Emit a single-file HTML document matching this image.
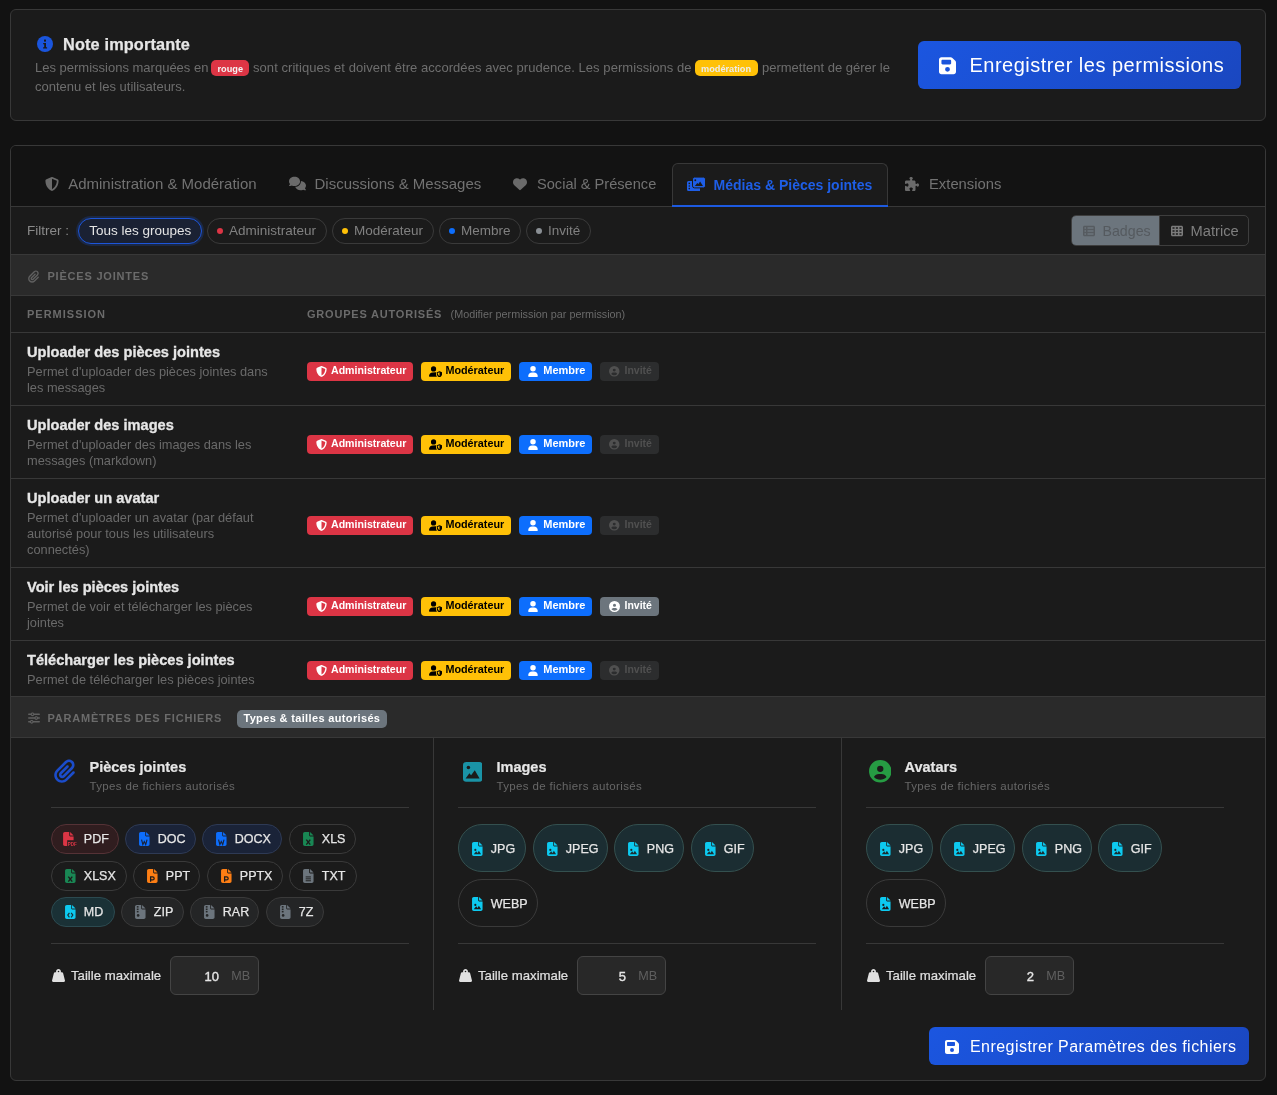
<!DOCTYPE html>
<html><head><meta charset="utf-8"><title>Permissions</title>
<style>
html,body{margin:0;padding:0;}
body{width:1277px;height:1095px;background:#121212;position:relative;overflow:hidden;font-family:"Liberation Sans", sans-serif;}
.t{position:absolute;white-space:nowrap;}
#w{position:absolute;left:0;top:0;width:1277px;height:1095px;will-change:transform;}
.r{position:absolute;display:block;}
</style></head><body>
<div id="w">
<div class="r" style="left:10px;top:9px;width:1256px;height:112px;box-sizing:border-box;border:1px solid #383838;border-radius:6px;background:#1b1b1b;"></div>
<svg class="r" style="left:37.0px;top:36.0px;" width="16" height="16" viewBox="0 0 16 16"><circle cx="8" cy="8" r="8" fill="#1a55dd"/><rect x="7" y="3.6" width="2" height="2" fill="#1b1b1b"/><path d="M6.2 7h2.8v4.2h1.1v1.3H6.1v-1.3h1.1V8.3h-1z" fill="#1b1b1b"/></svg>
<div class="t" style="left:63px;top:33.85px;font-size:16.3px;line-height:21px;color:#e6e6e6;font-weight:700;letter-spacing:0.15px;-webkit-text-stroke:0.25px #e6e6e6;">Note importante</div>
<div class="t" style="left:35px;top:59.20px;font-size:13px;line-height:17px;color:#6e6e6e;font-weight:400;letter-spacing:0px;">Les permissions marquées en</div>
<div class="r" style="left:211px;top:60px;width:38px;height:16px;background:#dc3545;border-radius:5px;"></div>
<div class="t" style="left:217.5px;top:62.61px;font-size:9.2px;line-height:12px;color:#f4f4f4;font-weight:700;letter-spacing:0px;">rouge</div>
<div class="t" style="left:253px;top:59.20px;font-size:13px;line-height:17px;color:#6e6e6e;font-weight:400;letter-spacing:0.058px;">sont critiques et doivent être accordées avec prudence. Les permissions de</div>
<div class="r" style="left:695px;top:60px;width:63px;height:16px;background:#ffc107;border-radius:5px;"></div>
<div class="t" style="left:701px;top:62.61px;font-size:9.2px;line-height:12px;color:#ececec;font-weight:700;letter-spacing:0px;">modération</div>
<div class="t" style="left:762px;top:59.20px;font-size:13px;line-height:17px;color:#6e6e6e;font-weight:400;letter-spacing:0px;">permettent de gérer le</div>
<div class="t" style="left:35px;top:78.00px;font-size:13px;line-height:17px;color:#6e6e6e;font-weight:400;letter-spacing:0px;">contenu et les utilisateurs.</div>
<div class="r" style="left:918px;top:41px;width:323px;height:48px;background:linear-gradient(135deg,#1b56e0,#1a47c0);border-radius:6px;"></div>
<svg class="r" style="left:939px;top:56px;" width="17" height="19.428571428571427" viewBox="0 0 448 512"><path fill="#fff" d="M64 32C28.7 32 0 60.7 0 96v320c0 35.3 28.7 64 64 64h320c35.3 0 64-28.7 64-64V173.3c0-17-6.7-33.3-18.7-45.3L352 50.7C340 38.7 323.7 32 306.7 32H64zm0 96c0-17.7 14.3-32 32-32h192c17.7 0 32 14.3 32 32v64c0 17.7-14.3 32-32 32H96c-17.7 0-32-14.3-32-32v-64zm160 160a64 64 0 1 1 0 128 64 64 0 1 1 0-128z"/></svg>
<div class="t" style="left:969.5px;top:52.27px;font-size:20px;line-height:26px;color:#ffffff;font-weight:400;letter-spacing:0.5px;">Enregistrer les permissions</div>
<div class="r" style="left:10px;top:145px;width:1256px;height:936px;box-sizing:border-box;border:1px solid #383838;border-radius:6px;background:#1b1b1b;overflow:hidden;"></div>
<div class="r" style="left:11px;top:146px;width:1254px;height:60px;background:#131313;border-radius:5px 5px 0 0;"></div>
<div class="r" style="left:11px;top:206px;width:1254px;height:1px;background:#383838;"></div>
<div class="r" style="left:672px;top:163px;width:216px;height:44px;box-sizing:border-box;border:1px solid #383838;border-bottom:none;border-radius:6px 6px 0 0;background:#1b1b1b;"></div>
<div class="r" style="left:672px;top:205px;width:216px;height:2px;background:#1d5ae0;"></div>
<svg class="r" style="left:45px;top:177px;" width="14" height="14" viewBox="0 0 512 512"><path fill="#6a6a6a" d="M256 0c4.6 0 9.2 1 13.4 2.9L457.7 82.8c22 9.3 38.4 31 38.3 57.2-.5 99.2-41.3 280.7-213.6 363.2-16.7 8-36.1 8-52.8 0C57.3 420.7 16.5 239.2 16 140c-.1-26.2 16.3-47.9 38.3-57.2L242.7 2.9C246.8 1 251.4 0 256 0zm0 66.8V444.8C394 378 431.1 230.1 432 141.4L256 66.8z"/></svg>
<div class="t" style="left:68.2px;top:174.00px;font-size:15px;line-height:20px;color:#727272;font-weight:400;letter-spacing:0px;">Administration &amp; Modération</div>
<svg class="r" style="left:289px;top:176px;" width="17" height="15" viewBox="0 0 640 512"><path fill="#6a6a6a" d="M208 352c114.9 0 208-78.8 208-176S322.9 0 208 0 0 78.8 0 176c0 38.6 14.7 74.3 39.6 103.4-3.5 9.4-8.7 17.7-14.2 24.7-4.8 6.2-9.7 11-13.3 14.3-1.8 1.6-3.3 2.9-4.3 3.7-.5.4-.9.7-1.1.8l-.2.2C1 327.2-1.4 334.4.8 340.9S9.1 352 16 352c21.8 0 43.8-5.6 62.1-12.5 9.2-3.5 17.8-7.4 25.2-11.4C134.1 343.3 169.8 352 208 352z"/><path fill="#6a6a6a" d="M448 176c0 112.3-99.1 196.9-216.5 207C255.8 457.4 336.4 512 432 512c38.2 0 73.9-8.7 104.7-23.9 7.5 4 16 7.9 25.2 11.4 18.3 6.9 40.3 12.5 62.1 12.5 6.9 0 13.1-4.5 15.2-11.1 2.1-6.6-.2-13.8-5.8-17.9l-.2-.2c-.2-.2-.6-.4-1.1-.8-1-.8-2.5-2-4.3-3.7-3.6-3.3-8.5-8.1-13.3-14.3-5.5-7-10.7-15.4-14.2-24.7 24.9-29 39.6-64.7 39.6-103.4 0-92.8-84.9-168.9-192.6-175.5.4 5.1.6 10.3.6 15.5z"/></svg>
<div class="t" style="left:314.5px;top:174.00px;font-size:15px;line-height:20px;color:#727272;font-weight:400;letter-spacing:0px;">Discussions &amp; Messages</div>
<svg class="r" style="left:512.7px;top:177px;" width="14" height="14" viewBox="0 0 512 512"><path fill="#6a6a6a" d="M47.6 300.4L228.3 469.1c7.5 7 17.4 10.9 27.7 10.9s20.2-3.9 27.7-10.9L464.4 300.4c30.4-28.3 47.6-68 47.6-109.5v-5.8c0-69.9-50.5-129.5-119.4-141C347 36.5 300.6 51.4 268 84L256 96 244 84c-32.6-32.6-79-47.5-124.6-39.9C50.5 55.6 0 115.2 0 185.1v5.8c0 41.5 17.2 81.2 47.6 109.5z"/></svg>
<div class="t" style="left:537px;top:174.64px;font-size:14.6px;line-height:19px;color:#727272;font-weight:400;letter-spacing:0px;">Social &amp; Présence</div>
<svg class="r" style="left:687px;top:177px;" width="18.5" height="14" viewBox="0 0 18.5 14"><path fill="#1e5ee6" d="M1.5 4H6V11H13V14H1.5A1.5 1.5 0 0 1 0 12.5V5.5A1.5 1.5 0 0 1 1.5 4z"/><circle cx="2.3" cy="6.4" r="0.8" fill="#1b1b1b"/><circle cx="2.3" cy="9" r="0.8" fill="#1b1b1b"/><circle cx="2.3" cy="11.6" r="0.8" fill="#1b1b1b"/><rect x="5.5" y="0.1" width="13" height="10.8" rx="2" fill="#1e5ee6" stroke="#1b1b1b" stroke-width="1"/><circle cx="8.3" cy="3.2" r="0.95" fill="#1b1b1b"/><path d="M7.9 8.9L10.3 6L11.4 7L13.1 4.5L16 8.9z" fill="#1b1b1b"/></svg>
<div class="t" style="left:713.6px;top:175.95px;font-size:14px;line-height:18px;color:#1e5ee6;font-weight:700;letter-spacing:0px;">Médias &amp; Pièces jointes</div>
<svg class="r" style="left:905px;top:177px;" width="14" height="14" viewBox="0 0 512 512"><path fill="#6a6a6a" d="M192 104.8c0-9.2-5.8-17.3-13.2-22.8C167.2 73.3 160 61.3 160 48c0-26.5 28.7-48 64-48s64 21.5 64 48c0 13.3-7.2 25.3-18.8 34c-7.4 5.5-13.2 13.6-13.2 22.8c0 12.8 10.4 23.2 23.2 23.2H336c26.5 0 48 21.5 48 48v56.8c0 12.8 10.4 23.2 23.2 23.2c9.2 0 17.3-5.8 22.8-13.2c8.7-11.6 20.7-18.8 34-18.8c26.5 0 48 28.7 48 64s-21.5 64-48 64c-13.3 0-25.3-7.2-34-18.8c-5.5-7.4-13.6-13.2-22.8-13.2c-12.8 0-23.2 10.4-23.2 23.2V464c0 26.5-21.5 48-48 48H279.2c-12.8 0-23.2-10.4-23.2-23.2c0-9.2 5.8-17.3 13.2-22.8c11.6-8.7 18.8-20.7 18.8-34c0-26.5-28.7-48-64-48s-64 21.5-64 48c0 13.3 7.2 25.3 18.8 34c7.4 5.5 13.2 13.6 13.2 22.8c0 12.8-10.4 23.2-23.2 23.2H48c-26.5 0-48-21.5-48-48V343.2C0 330.4 10.4 320 23.2 320c9.2 0 17.3 5.8 22.8 13.2C54.7 344.8 66.7 352 80 352c26.5 0 48-28.7 48-64s-21.5-64-48-64c-13.3 0-25.3 7.2-34 18.8C40.5 250.2 32.4 256 23.2 256C10.4 256 0 245.6 0 232.8V176c0-26.5 21.5-48 48-48H168.8c12.8 0 23.2-10.4 23.2-23.2z"/></svg>
<div class="t" style="left:929px;top:174.57px;font-size:14.8px;line-height:19px;color:#727272;font-weight:400;letter-spacing:0px;">Extensions</div>
<div class="t" style="left:27px;top:221.62px;font-size:13.5px;line-height:18px;color:#8a8a8a;font-weight:400;letter-spacing:0px;">Filtrer :</div>
<div class="r" style="left:78px;top:218px;width:124px;height:26px;box-sizing:border-box;border:1.5px solid #1d55d8;border-radius:13px;background:#1a2133;box-shadow:0 0 0 2px rgba(29,85,216,0.22);"></div>
<div class="t" style="left:89.3px;top:221.62px;font-size:13.5px;line-height:18px;color:#e4e4e4;font-weight:400;letter-spacing:0px;">Tous les groupes</div>
<div class="r" style="left:207px;top:218px;width:120px;height:26px;box-sizing:border-box;border:1px solid #3a3a3a;border-radius:13px;"></div>
<div class="r" style="left:217px;top:228px;width:6px;height:6px;background:#dc3545;border-radius:3px;"></div>
<div class="t" style="left:229px;top:221.62px;font-size:13.5px;line-height:18px;color:#808080;font-weight:400;letter-spacing:0px;">Administrateur</div>
<div class="r" style="left:332px;top:218px;width:102px;height:26px;box-sizing:border-box;border:1px solid #3a3a3a;border-radius:13px;"></div>
<div class="r" style="left:342px;top:228px;width:6px;height:6px;background:#ffc107;border-radius:3px;"></div>
<div class="t" style="left:354px;top:221.62px;font-size:13.5px;line-height:18px;color:#808080;font-weight:400;letter-spacing:0px;">Modérateur</div>
<div class="r" style="left:439px;top:218px;width:82px;height:26px;box-sizing:border-box;border:1px solid #3a3a3a;border-radius:13px;"></div>
<div class="r" style="left:449px;top:228px;width:6px;height:6px;background:#0d6efd;border-radius:3px;"></div>
<div class="t" style="left:461px;top:221.62px;font-size:13.5px;line-height:18px;color:#808080;font-weight:400;letter-spacing:0px;">Membre</div>
<div class="r" style="left:526px;top:218px;width:65px;height:26px;box-sizing:border-box;border:1px solid #3a3a3a;border-radius:13px;"></div>
<div class="r" style="left:536px;top:228px;width:6px;height:6px;background:#8a8f94;border-radius:3px;"></div>
<div class="t" style="left:548px;top:221.62px;font-size:13.5px;line-height:18px;color:#808080;font-weight:400;letter-spacing:0px;">Invité</div>
<div class="r" style="left:1071px;top:215px;width:178px;height:31px;box-sizing:border-box;border:1px solid #3e3e3e;border-radius:5px;"></div>
<div class="r" style="left:1072px;top:216px;width:88px;height:29px;background:#6c757d;border-radius:4px 0 0 4px;"></div>
<div class="r" style="left:1159px;top:216px;width:1px;height:29px;background:#3e3e3e;"></div>
<svg class="r" style="left:1083px;top:224.5px;" width="12" height="12" viewBox="0 0 512 512"><path fill="#565b60" d="M0 96C0 60.7 28.7 32 64 32H448c35.3 0 64 28.7 64 64V416c0 35.3-28.7 64-64 64H64c-35.3 0-64-28.7-64-64V96zm64 0v64h64V96H64zm384 0H192v64H448V96zM64 224v64h64V224H64zm384 0H192v64H448V224zM64 352v64h64V352H64zm384 0H192v64H448V352z"/></svg>
<div class="t" style="left:1102.5px;top:222.28px;font-size:14.2px;line-height:18px;color:#555a5f;font-weight:400;letter-spacing:0px;">Badges</div>
<svg class="r" style="left:1171px;top:224.5px;" width="12" height="12" viewBox="0 0 512 512"><path fill="#7c7c7c" d="M64 32C28.7 32 0 60.7 0 96V416c0 35.3 28.7 64 64 64H448c35.3 0 64-28.7 64-64V96c0-35.3-28.7-64-64-64H64zm88 64v64H64V96h88zm56 0h88v64H208V96zm240 0v64H360V96h88zM64 224h88v64H64V224zm232 0v64H208V224h88zm64 0h88v64H360V224zM152 352v64H64V352h88zm56 0h88v64H208V352zm240 0v64H360V352h88z"/></svg>
<div class="t" style="left:1190.5px;top:221.61px;font-size:14.7px;line-height:19px;color:#7f7f7f;font-weight:400;letter-spacing:0px;">Matrice</div>
<div class="r" style="left:11px;top:254px;width:1254px;height:1px;background:#383838;"></div>
<div class="r" style="left:11px;top:255px;width:1254px;height:40px;background:#2a2a2a;"></div>
<div class="r" style="left:11px;top:295px;width:1254px;height:1px;background:#383838;"></div>
<svg class="r" style="left:28px;top:270px;" width="11" height="13" viewBox="0 0 448 512"><path fill="#606060" d="M364.2 83.8c-24.4-24.4-64-24.4-88.4 0l-184 184c-42.1 42.1-42.1 110.3 0 152.4s110.3 42.1 152.4 0l152-152c10.9-10.9 28.7-10.9 39.6 0s10.9 28.7 0 39.6l-152 152c-64 64-167.6 64-231.6 0s-64-167.6 0-231.6l184-184c46.3-46.3 121.3-46.3 167.6 0s46.3 121.3 0 167.6l-176 176c-28.6 28.6-75 28.6-103.6 0s-28.6-75 0-103.6l144-144c10.9-10.9 28.7-10.9 39.6 0s10.9 28.7 0 39.6l-144 144c-6.7 6.7-6.7 17.7 0 24.4s17.7 6.7 24.4 0l176-176c24.4-24.4 24.4-64 0-88.4z"/></svg>
<div class="t" style="left:47.4px;top:268.69px;font-size:11px;line-height:14px;color:#6b6b6b;font-weight:700;letter-spacing:0.8px;">PIÈCES JOINTES</div>
<div class="t" style="left:27px;top:307.19px;font-size:11px;line-height:14px;color:#6b6b6b;font-weight:700;letter-spacing:1px;">PERMISSION</div>
<div class="t" style="left:307px;top:307.19px;font-size:11px;line-height:14px;color:#6b6b6b;font-weight:700;letter-spacing:0.8px;">GROUPES AUTORISÉS</div>
<div class="t" style="left:450.6px;top:307.26px;font-size:10.8px;line-height:14px;color:#6a6a6a;font-weight:400;letter-spacing:0px;">(Modifier permission par permission)</div>
<div class="r" style="left:11px;top:332px;width:1254px;height:1px;background:#383838;"></div>
<div class="t" style="left:27px;top:342.94px;font-size:14.6px;line-height:19px;color:#e6e6e6;font-weight:700;letter-spacing:0px;-webkit-text-stroke:0.3px #e6e6e6;">Uploader des pièces jointes</div>
<div class="t" style="left:27px;top:363.06px;font-size:12.8px;line-height:17px;color:#6a6a6a;font-weight:400;letter-spacing:0px;">Permet d&#39;uploader des pièces jointes dans</div>
<div class="t" style="left:27px;top:379.16px;font-size:12.8px;line-height:17px;color:#6a6a6a;font-weight:400;letter-spacing:0px;">les messages</div>
<div class="r" style="left:307px;top:362px;width:106px;height:19px;background:#dc3545;border-radius:4px;"></div>
<svg class="r" style="left:316px;top:366px;" width="11" height="11" viewBox="0 0 512 512"><path fill="#fff" d="M256 0c4.6 0 9.2 1 13.4 2.9L457.7 82.8c22 9.3 38.4 31 38.3 57.2-.5 99.2-41.3 280.7-213.6 363.2-16.7 8-36.1 8-52.8 0C57.3 420.7 16.5 239.2 16 140c-.1-26.2 16.3-47.9 38.3-57.2L242.7 2.9C246.8 1 251.4 0 256 0zm0 66.8V444.8C394 378 431.1 230.1 432 141.4L256 66.8z"/></svg>
<div class="t" style="left:331px;top:362.93px;font-size:10.6px;line-height:14px;color:#fff;font-weight:700;letter-spacing:0px;">Administrateur</div>
<div class="r" style="left:421px;top:362px;width:90px;height:19px;background:#ffc107;border-radius:4px;"></div>
<svg class="r" style="left:429px;top:366px;" width="13" height="11" viewBox="0 0 640 512"><path fill="#000" d="M224 256A128 128 0 1 0 224 0a128 128 0 1 0 0 256zm-45.7 48C79.8 304 0 383.8 0 482.3C0 498.7 13.3 512 29.7 512H388.5c-32-36.7-44.5-86.3-44.5-128V352.9c0-20.8 8.3-40 22.5-54.4-9.3-.7-18.8-1-28.3-1z"/><path fill="#000" d="M528 242.5c-3.4-1.5-7.1-2.3-10.9-2.3s-7.5 .8-10.9 2.3L395.3 289.5c-7.8 3.3-12.9 11-12.9 19.5l.1 27c.5 61.5 26.1 164.6 126.7 212.5 5 2.4 10.8 2.4 15.8 0C625.6 500.6 651.2 397.5 651.7 336l.1-27c0-8.5-5.1-16.2-12.9-19.5L528 242.5zm-11 55.4V479.5C454.3 448 432.4 377.5 430.5 331.3L517 297.9z"/></svg>
<div class="t" style="left:445.4px;top:362.86px;font-size:10.8px;line-height:14px;color:#000;font-weight:700;letter-spacing:0px;">Modérateur</div>
<div class="r" style="left:519px;top:362px;width:73px;height:19px;background:#0d6efd;border-radius:4px;"></div>
<svg class="r" style="left:528px;top:366px;" width="10" height="11" viewBox="0 0 448 512"><path fill="#fff" d="M224 256A128 128 0 1 0 224 0a128 128 0 1 0 0 256zm-45.7 48C79.8 304 0 383.8 0 482.3C0 498.7 13.3 512 29.7 512H418.3c16.4 0 29.7-13.3 29.7-29.7C448 383.8 368.2 304 269.7 304H178.3z"/></svg>
<div class="t" style="left:543.3px;top:363.29px;font-size:11px;line-height:14px;color:#fff;font-weight:700;letter-spacing:0px;">Membre</div>
<div class="r" style="left:600px;top:362px;width:59px;height:19px;background:#2c2d2e;border-radius:4px;"></div>
<svg class="r" style="left:609px;top:366px;" width="10.5" height="10.5" viewBox="0 0 512 512"><path fill="#505050" d="M399 384.2C376.9 345.8 335.4 320 288 320H224c-47.4 0-88.9 25.8-111 64.2c35.2 39.2 86.2 63.8 143 63.8s107.8-24.7 143-63.8zM0 256a256 256 0 1 1 512 0A256 256 0 1 1 0 256zm256 16a72 72 0 1 0 0-144 72 72 0 1 0 0 144z"/></svg>
<div class="t" style="left:624.5px;top:362.96px;font-size:10.5px;line-height:14px;color:#505050;font-weight:700;letter-spacing:0px;">Invité</div>
<div class="r" style="left:11px;top:405px;width:1254px;height:1px;background:#383838;"></div>
<div class="t" style="left:27px;top:415.94px;font-size:14.6px;line-height:19px;color:#e6e6e6;font-weight:700;letter-spacing:0px;-webkit-text-stroke:0.3px #e6e6e6;">Uploader des images</div>
<div class="t" style="left:27px;top:436.06px;font-size:12.8px;line-height:17px;color:#6a6a6a;font-weight:400;letter-spacing:0px;">Permet d&#39;uploader des images dans les</div>
<div class="t" style="left:27px;top:452.16px;font-size:12.8px;line-height:17px;color:#6a6a6a;font-weight:400;letter-spacing:0px;">messages (markdown)</div>
<div class="r" style="left:307px;top:435px;width:106px;height:19px;background:#dc3545;border-radius:4px;"></div>
<svg class="r" style="left:316px;top:439px;" width="11" height="11" viewBox="0 0 512 512"><path fill="#fff" d="M256 0c4.6 0 9.2 1 13.4 2.9L457.7 82.8c22 9.3 38.4 31 38.3 57.2-.5 99.2-41.3 280.7-213.6 363.2-16.7 8-36.1 8-52.8 0C57.3 420.7 16.5 239.2 16 140c-.1-26.2 16.3-47.9 38.3-57.2L242.7 2.9C246.8 1 251.4 0 256 0zm0 66.8V444.8C394 378 431.1 230.1 432 141.4L256 66.8z"/></svg>
<div class="t" style="left:331px;top:435.93px;font-size:10.6px;line-height:14px;color:#fff;font-weight:700;letter-spacing:0px;">Administrateur</div>
<div class="r" style="left:421px;top:435px;width:90px;height:19px;background:#ffc107;border-radius:4px;"></div>
<svg class="r" style="left:429px;top:439px;" width="13" height="11" viewBox="0 0 640 512"><path fill="#000" d="M224 256A128 128 0 1 0 224 0a128 128 0 1 0 0 256zm-45.7 48C79.8 304 0 383.8 0 482.3C0 498.7 13.3 512 29.7 512H388.5c-32-36.7-44.5-86.3-44.5-128V352.9c0-20.8 8.3-40 22.5-54.4-9.3-.7-18.8-1-28.3-1z"/><path fill="#000" d="M528 242.5c-3.4-1.5-7.1-2.3-10.9-2.3s-7.5 .8-10.9 2.3L395.3 289.5c-7.8 3.3-12.9 11-12.9 19.5l.1 27c.5 61.5 26.1 164.6 126.7 212.5 5 2.4 10.8 2.4 15.8 0C625.6 500.6 651.2 397.5 651.7 336l.1-27c0-8.5-5.1-16.2-12.9-19.5L528 242.5zm-11 55.4V479.5C454.3 448 432.4 377.5 430.5 331.3L517 297.9z"/></svg>
<div class="t" style="left:445.4px;top:435.86px;font-size:10.8px;line-height:14px;color:#000;font-weight:700;letter-spacing:0px;">Modérateur</div>
<div class="r" style="left:519px;top:435px;width:73px;height:19px;background:#0d6efd;border-radius:4px;"></div>
<svg class="r" style="left:528px;top:439px;" width="10" height="11" viewBox="0 0 448 512"><path fill="#fff" d="M224 256A128 128 0 1 0 224 0a128 128 0 1 0 0 256zm-45.7 48C79.8 304 0 383.8 0 482.3C0 498.7 13.3 512 29.7 512H418.3c16.4 0 29.7-13.3 29.7-29.7C448 383.8 368.2 304 269.7 304H178.3z"/></svg>
<div class="t" style="left:543.3px;top:436.29px;font-size:11px;line-height:14px;color:#fff;font-weight:700;letter-spacing:0px;">Membre</div>
<div class="r" style="left:600px;top:435px;width:59px;height:19px;background:#2c2d2e;border-radius:4px;"></div>
<svg class="r" style="left:609px;top:439px;" width="10.5" height="10.5" viewBox="0 0 512 512"><path fill="#505050" d="M399 384.2C376.9 345.8 335.4 320 288 320H224c-47.4 0-88.9 25.8-111 64.2c35.2 39.2 86.2 63.8 143 63.8s107.8-24.7 143-63.8zM0 256a256 256 0 1 1 512 0A256 256 0 1 1 0 256zm256 16a72 72 0 1 0 0-144 72 72 0 1 0 0 144z"/></svg>
<div class="t" style="left:624.5px;top:435.96px;font-size:10.5px;line-height:14px;color:#505050;font-weight:700;letter-spacing:0px;">Invité</div>
<div class="r" style="left:11px;top:478px;width:1254px;height:1px;background:#383838;"></div>
<div class="t" style="left:27px;top:488.94px;font-size:14.6px;line-height:19px;color:#e6e6e6;font-weight:700;letter-spacing:0px;-webkit-text-stroke:0.3px #e6e6e6;">Uploader un avatar</div>
<div class="t" style="left:27px;top:509.06px;font-size:12.8px;line-height:17px;color:#6a6a6a;font-weight:400;letter-spacing:0px;">Permet d&#39;uploader un avatar (par défaut</div>
<div class="t" style="left:27px;top:525.16px;font-size:12.8px;line-height:17px;color:#6a6a6a;font-weight:400;letter-spacing:0px;">autorisé pour tous les utilisateurs</div>
<div class="t" style="left:27px;top:541.26px;font-size:12.8px;line-height:17px;color:#6a6a6a;font-weight:400;letter-spacing:0px;">connectés)</div>
<div class="r" style="left:307px;top:516px;width:106px;height:19px;background:#dc3545;border-radius:4px;"></div>
<svg class="r" style="left:316px;top:520px;" width="11" height="11" viewBox="0 0 512 512"><path fill="#fff" d="M256 0c4.6 0 9.2 1 13.4 2.9L457.7 82.8c22 9.3 38.4 31 38.3 57.2-.5 99.2-41.3 280.7-213.6 363.2-16.7 8-36.1 8-52.8 0C57.3 420.7 16.5 239.2 16 140c-.1-26.2 16.3-47.9 38.3-57.2L242.7 2.9C246.8 1 251.4 0 256 0zm0 66.8V444.8C394 378 431.1 230.1 432 141.4L256 66.8z"/></svg>
<div class="t" style="left:331px;top:516.93px;font-size:10.6px;line-height:14px;color:#fff;font-weight:700;letter-spacing:0px;">Administrateur</div>
<div class="r" style="left:421px;top:516px;width:90px;height:19px;background:#ffc107;border-radius:4px;"></div>
<svg class="r" style="left:429px;top:520px;" width="13" height="11" viewBox="0 0 640 512"><path fill="#000" d="M224 256A128 128 0 1 0 224 0a128 128 0 1 0 0 256zm-45.7 48C79.8 304 0 383.8 0 482.3C0 498.7 13.3 512 29.7 512H388.5c-32-36.7-44.5-86.3-44.5-128V352.9c0-20.8 8.3-40 22.5-54.4-9.3-.7-18.8-1-28.3-1z"/><path fill="#000" d="M528 242.5c-3.4-1.5-7.1-2.3-10.9-2.3s-7.5 .8-10.9 2.3L395.3 289.5c-7.8 3.3-12.9 11-12.9 19.5l.1 27c.5 61.5 26.1 164.6 126.7 212.5 5 2.4 10.8 2.4 15.8 0C625.6 500.6 651.2 397.5 651.7 336l.1-27c0-8.5-5.1-16.2-12.9-19.5L528 242.5zm-11 55.4V479.5C454.3 448 432.4 377.5 430.5 331.3L517 297.9z"/></svg>
<div class="t" style="left:445.4px;top:516.86px;font-size:10.8px;line-height:14px;color:#000;font-weight:700;letter-spacing:0px;">Modérateur</div>
<div class="r" style="left:519px;top:516px;width:73px;height:19px;background:#0d6efd;border-radius:4px;"></div>
<svg class="r" style="left:528px;top:520px;" width="10" height="11" viewBox="0 0 448 512"><path fill="#fff" d="M224 256A128 128 0 1 0 224 0a128 128 0 1 0 0 256zm-45.7 48C79.8 304 0 383.8 0 482.3C0 498.7 13.3 512 29.7 512H418.3c16.4 0 29.7-13.3 29.7-29.7C448 383.8 368.2 304 269.7 304H178.3z"/></svg>
<div class="t" style="left:543.3px;top:517.29px;font-size:11px;line-height:14px;color:#fff;font-weight:700;letter-spacing:0px;">Membre</div>
<div class="r" style="left:600px;top:516px;width:59px;height:19px;background:#2c2d2e;border-radius:4px;"></div>
<svg class="r" style="left:609px;top:520px;" width="10.5" height="10.5" viewBox="0 0 512 512"><path fill="#505050" d="M399 384.2C376.9 345.8 335.4 320 288 320H224c-47.4 0-88.9 25.8-111 64.2c35.2 39.2 86.2 63.8 143 63.8s107.8-24.7 143-63.8zM0 256a256 256 0 1 1 512 0A256 256 0 1 1 0 256zm256 16a72 72 0 1 0 0-144 72 72 0 1 0 0 144z"/></svg>
<div class="t" style="left:624.5px;top:516.96px;font-size:10.5px;line-height:14px;color:#505050;font-weight:700;letter-spacing:0px;">Invité</div>
<div class="r" style="left:11px;top:567px;width:1254px;height:1px;background:#383838;"></div>
<div class="t" style="left:27px;top:577.94px;font-size:14.6px;line-height:19px;color:#e6e6e6;font-weight:700;letter-spacing:0px;-webkit-text-stroke:0.3px #e6e6e6;">Voir les pièces jointes</div>
<div class="t" style="left:27px;top:598.06px;font-size:12.8px;line-height:17px;color:#6a6a6a;font-weight:400;letter-spacing:0px;">Permet de voir et télécharger les pièces</div>
<div class="t" style="left:27px;top:614.16px;font-size:12.8px;line-height:17px;color:#6a6a6a;font-weight:400;letter-spacing:0px;">jointes</div>
<div class="r" style="left:307px;top:597px;width:106px;height:19px;background:#dc3545;border-radius:4px;"></div>
<svg class="r" style="left:316px;top:601px;" width="11" height="11" viewBox="0 0 512 512"><path fill="#fff" d="M256 0c4.6 0 9.2 1 13.4 2.9L457.7 82.8c22 9.3 38.4 31 38.3 57.2-.5 99.2-41.3 280.7-213.6 363.2-16.7 8-36.1 8-52.8 0C57.3 420.7 16.5 239.2 16 140c-.1-26.2 16.3-47.9 38.3-57.2L242.7 2.9C246.8 1 251.4 0 256 0zm0 66.8V444.8C394 378 431.1 230.1 432 141.4L256 66.8z"/></svg>
<div class="t" style="left:331px;top:597.93px;font-size:10.6px;line-height:14px;color:#fff;font-weight:700;letter-spacing:0px;">Administrateur</div>
<div class="r" style="left:421px;top:597px;width:90px;height:19px;background:#ffc107;border-radius:4px;"></div>
<svg class="r" style="left:429px;top:601px;" width="13" height="11" viewBox="0 0 640 512"><path fill="#000" d="M224 256A128 128 0 1 0 224 0a128 128 0 1 0 0 256zm-45.7 48C79.8 304 0 383.8 0 482.3C0 498.7 13.3 512 29.7 512H388.5c-32-36.7-44.5-86.3-44.5-128V352.9c0-20.8 8.3-40 22.5-54.4-9.3-.7-18.8-1-28.3-1z"/><path fill="#000" d="M528 242.5c-3.4-1.5-7.1-2.3-10.9-2.3s-7.5 .8-10.9 2.3L395.3 289.5c-7.8 3.3-12.9 11-12.9 19.5l.1 27c.5 61.5 26.1 164.6 126.7 212.5 5 2.4 10.8 2.4 15.8 0C625.6 500.6 651.2 397.5 651.7 336l.1-27c0-8.5-5.1-16.2-12.9-19.5L528 242.5zm-11 55.4V479.5C454.3 448 432.4 377.5 430.5 331.3L517 297.9z"/></svg>
<div class="t" style="left:445.4px;top:597.86px;font-size:10.8px;line-height:14px;color:#000;font-weight:700;letter-spacing:0px;">Modérateur</div>
<div class="r" style="left:519px;top:597px;width:73px;height:19px;background:#0d6efd;border-radius:4px;"></div>
<svg class="r" style="left:528px;top:601px;" width="10" height="11" viewBox="0 0 448 512"><path fill="#fff" d="M224 256A128 128 0 1 0 224 0a128 128 0 1 0 0 256zm-45.7 48C79.8 304 0 383.8 0 482.3C0 498.7 13.3 512 29.7 512H418.3c16.4 0 29.7-13.3 29.7-29.7C448 383.8 368.2 304 269.7 304H178.3z"/></svg>
<div class="t" style="left:543.3px;top:598.29px;font-size:11px;line-height:14px;color:#fff;font-weight:700;letter-spacing:0px;">Membre</div>
<div class="r" style="left:600px;top:597px;width:59px;height:19px;background:#6c757d;border-radius:4px;"></div>
<svg class="r" style="left:609px;top:601px;" width="11" height="11" viewBox="0 0 512 512"><path fill="#fff" d="M399 384.2C376.9 345.8 335.4 320 288 320H224c-47.4 0-88.9 25.8-111 64.2c35.2 39.2 86.2 63.8 143 63.8s107.8-24.7 143-63.8zM0 256a256 256 0 1 1 512 0A256 256 0 1 1 0 256zm256 16a72 72 0 1 0 0-144 72 72 0 1 0 0 144z"/></svg>
<div class="t" style="left:624.5px;top:597.96px;font-size:10.5px;line-height:14px;color:#fff;font-weight:700;letter-spacing:0px;">Invité</div>
<div class="r" style="left:11px;top:640px;width:1254px;height:1px;background:#383838;"></div>
<div class="t" style="left:27px;top:650.94px;font-size:14.6px;line-height:19px;color:#e6e6e6;font-weight:700;letter-spacing:0px;-webkit-text-stroke:0.3px #e6e6e6;">Télécharger les pièces jointes</div>
<div class="t" style="left:27px;top:671.06px;font-size:12.8px;line-height:17px;color:#6a6a6a;font-weight:400;letter-spacing:0px;">Permet de télécharger les pièces jointes</div>
<div class="r" style="left:307px;top:661px;width:106px;height:19px;background:#dc3545;border-radius:4px;"></div>
<svg class="r" style="left:316px;top:665px;" width="11" height="11" viewBox="0 0 512 512"><path fill="#fff" d="M256 0c4.6 0 9.2 1 13.4 2.9L457.7 82.8c22 9.3 38.4 31 38.3 57.2-.5 99.2-41.3 280.7-213.6 363.2-16.7 8-36.1 8-52.8 0C57.3 420.7 16.5 239.2 16 140c-.1-26.2 16.3-47.9 38.3-57.2L242.7 2.9C246.8 1 251.4 0 256 0zm0 66.8V444.8C394 378 431.1 230.1 432 141.4L256 66.8z"/></svg>
<div class="t" style="left:331px;top:661.93px;font-size:10.6px;line-height:14px;color:#fff;font-weight:700;letter-spacing:0px;">Administrateur</div>
<div class="r" style="left:421px;top:661px;width:90px;height:19px;background:#ffc107;border-radius:4px;"></div>
<svg class="r" style="left:429px;top:665px;" width="13" height="11" viewBox="0 0 640 512"><path fill="#000" d="M224 256A128 128 0 1 0 224 0a128 128 0 1 0 0 256zm-45.7 48C79.8 304 0 383.8 0 482.3C0 498.7 13.3 512 29.7 512H388.5c-32-36.7-44.5-86.3-44.5-128V352.9c0-20.8 8.3-40 22.5-54.4-9.3-.7-18.8-1-28.3-1z"/><path fill="#000" d="M528 242.5c-3.4-1.5-7.1-2.3-10.9-2.3s-7.5 .8-10.9 2.3L395.3 289.5c-7.8 3.3-12.9 11-12.9 19.5l.1 27c.5 61.5 26.1 164.6 126.7 212.5 5 2.4 10.8 2.4 15.8 0C625.6 500.6 651.2 397.5 651.7 336l.1-27c0-8.5-5.1-16.2-12.9-19.5L528 242.5zm-11 55.4V479.5C454.3 448 432.4 377.5 430.5 331.3L517 297.9z"/></svg>
<div class="t" style="left:445.4px;top:661.86px;font-size:10.8px;line-height:14px;color:#000;font-weight:700;letter-spacing:0px;">Modérateur</div>
<div class="r" style="left:519px;top:661px;width:73px;height:19px;background:#0d6efd;border-radius:4px;"></div>
<svg class="r" style="left:528px;top:665px;" width="10" height="11" viewBox="0 0 448 512"><path fill="#fff" d="M224 256A128 128 0 1 0 224 0a128 128 0 1 0 0 256zm-45.7 48C79.8 304 0 383.8 0 482.3C0 498.7 13.3 512 29.7 512H418.3c16.4 0 29.7-13.3 29.7-29.7C448 383.8 368.2 304 269.7 304H178.3z"/></svg>
<div class="t" style="left:543.3px;top:662.29px;font-size:11px;line-height:14px;color:#fff;font-weight:700;letter-spacing:0px;">Membre</div>
<div class="r" style="left:600px;top:661px;width:59px;height:19px;background:#2c2d2e;border-radius:4px;"></div>
<svg class="r" style="left:609px;top:665px;" width="10.5" height="10.5" viewBox="0 0 512 512"><path fill="#505050" d="M399 384.2C376.9 345.8 335.4 320 288 320H224c-47.4 0-88.9 25.8-111 64.2c35.2 39.2 86.2 63.8 143 63.8s107.8-24.7 143-63.8zM0 256a256 256 0 1 1 512 0A256 256 0 1 1 0 256zm256 16a72 72 0 1 0 0-144 72 72 0 1 0 0 144z"/></svg>
<div class="t" style="left:624.5px;top:661.96px;font-size:10.5px;line-height:14px;color:#505050;font-weight:700;letter-spacing:0px;">Invité</div>
<div class="r" style="left:11px;top:696px;width:1254px;height:1px;background:#383838;"></div>
<div class="r" style="left:11px;top:697px;width:1254px;height:40px;background:#2a2a2a;"></div>
<div class="r" style="left:11px;top:737px;width:1254px;height:1px;background:#383838;"></div>
<svg class="r" style="left:28px;top:712px;" width="12" height="12" viewBox="0 0 512 512"><path fill="#606060" d="M0 416c0 17.7 14.3 32 32 32l54.7 0c12.3 28.3 40.5 48 73.3 48s61-19.7 73.3-48L480 448c17.7 0 32-14.3 32-32s-14.3-32-32-32l-246.7 0c-12.3-28.3-40.5-48-73.3-48s-61 19.7-73.3 48L32 384c-17.7 0-32 14.3-32 32zm128 0a32 32 0 1 1 64 0 32 32 0 1 1 -64 0zM320 256a32 32 0 1 1 64 0 32 32 0 1 1 -64 0zm32-80c-32.8 0-61 19.7-73.3 48L32 224c-17.7 0-32 14.3-32 32s14.3 32 32 32l246.7 0c12.3 28.3 40.5 48 73.3 48s61-19.7 73.3-48l54.7 0c17.7 0 32-14.3 32-32s-14.3-32-32-32l-54.7 0c-12.3-28.3-40.5-48-73.3-48zM192 128a32 32 0 1 1 0-64 32 32 0 1 1 0 64zm73.3-64C253 35.7 224.8 16 192 16s-61 19.7-73.3 48L32 64C14.3 64 0 78.3 0 96s14.3 32 32 32l86.7 0c12.3 28.3 40.5 48 73.3 48s61-19.7 73.3-48L480 128c17.7 0 32-14.3 32-32s-14.3-32-32-32L265.3 64z"/></svg>
<div class="t" style="left:47.4px;top:711.19px;font-size:11px;line-height:14px;color:#6b6b6b;font-weight:700;letter-spacing:0.8px;">PARAMÈTRES DES FICHIERS</div>
<div class="r" style="left:237px;top:710px;width:150px;height:18px;background:#6c757d;border-radius:5px;"></div>
<div class="t" style="left:243.4px;top:710.99px;font-size:11px;line-height:14px;color:#fff;font-weight:700;letter-spacing:0.35px;">Types &amp; tailles autorisés</div>
<div class="r" style="left:433px;top:738px;width:1px;height:272px;background:#383838;"></div>
<div class="r" style="left:841px;top:738px;width:1px;height:272px;background:#383838;"></div>
<div class="t" style="left:89.5px;top:757.88px;font-size:14.5px;line-height:19px;color:#e6e6e6;font-weight:700;letter-spacing:0px;-webkit-text-stroke:0.2px #e6e6e6;">Pièces jointes</div>
<div class="t" style="left:89.5px;top:778.92px;font-size:11.5px;line-height:15px;color:#676767;font-weight:400;letter-spacing:0.35px;">Types de fichiers autorisés</div>
<div class="r" style="left:51px;top:807px;width:358px;height:1px;background:#383838;"></div>
<div class="r" style="left:51px;top:943px;width:358px;height:1px;background:#383838;"></div>
<svg class="r" style="left:52px;top:968.8px;" width="13" height="13" viewBox="0 0 512 512"><path fill="#e0e0e0" d="M224 96a32 32 0 1 1 64 0 32 32 0 1 1 -64 0zm122.5 32c3.5-10 5.5-20.8 5.5-32c0-53-43-96-96-96s-96 43-96 96c0 11.2 1.9 22 5.5 32H120c-22 0-41.2 15-46.6 36.4l-72 288c-3.6 14.3-.4 29.5 8.7 41.2S33.2 512 48 512H464c14.8 0 28.7-6.8 37.8-18.5s12.3-26.8 8.7-41.2l-72-288C433.2 143 414 128 392 128H346.5z"/></svg>
<div class="t" style="left:71px;top:966.93px;font-size:13.2px;line-height:17px;color:#e0e0e0;font-weight:400;letter-spacing:0px;-webkit-text-stroke:0.2px #e0e0e0;">Taille maximale</div>
<div class="t" style="left:496.5px;top:757.88px;font-size:14.5px;line-height:19px;color:#e6e6e6;font-weight:700;letter-spacing:0px;-webkit-text-stroke:0.2px #e6e6e6;">Images</div>
<div class="t" style="left:496.5px;top:778.92px;font-size:11.5px;line-height:15px;color:#676767;font-weight:400;letter-spacing:0.35px;">Types de fichiers autorisés</div>
<div class="r" style="left:458px;top:807px;width:358px;height:1px;background:#383838;"></div>
<div class="r" style="left:458px;top:943px;width:358px;height:1px;background:#383838;"></div>
<svg class="r" style="left:459px;top:968.8px;" width="13" height="13" viewBox="0 0 512 512"><path fill="#e0e0e0" d="M224 96a32 32 0 1 1 64 0 32 32 0 1 1 -64 0zm122.5 32c3.5-10 5.5-20.8 5.5-32c0-53-43-96-96-96s-96 43-96 96c0 11.2 1.9 22 5.5 32H120c-22 0-41.2 15-46.6 36.4l-72 288c-3.6 14.3-.4 29.5 8.7 41.2S33.2 512 48 512H464c14.8 0 28.7-6.8 37.8-18.5s12.3-26.8 8.7-41.2l-72-288C433.2 143 414 128 392 128H346.5z"/></svg>
<div class="t" style="left:478px;top:966.93px;font-size:13.2px;line-height:17px;color:#e0e0e0;font-weight:400;letter-spacing:0px;-webkit-text-stroke:0.2px #e0e0e0;">Taille maximale</div>
<div class="t" style="left:904.5px;top:757.88px;font-size:14.5px;line-height:19px;color:#e6e6e6;font-weight:700;letter-spacing:0px;-webkit-text-stroke:0.2px #e6e6e6;">Avatars</div>
<div class="t" style="left:904.5px;top:778.92px;font-size:11.5px;line-height:15px;color:#676767;font-weight:400;letter-spacing:0.35px;">Types de fichiers autorisés</div>
<div class="r" style="left:866px;top:807px;width:358px;height:1px;background:#383838;"></div>
<div class="r" style="left:866px;top:943px;width:358px;height:1px;background:#383838;"></div>
<svg class="r" style="left:867px;top:968.8px;" width="13" height="13" viewBox="0 0 512 512"><path fill="#e0e0e0" d="M224 96a32 32 0 1 1 64 0 32 32 0 1 1 -64 0zm122.5 32c3.5-10 5.5-20.8 5.5-32c0-53-43-96-96-96s-96 43-96 96c0 11.2 1.9 22 5.5 32H120c-22 0-41.2 15-46.6 36.4l-72 288c-3.6 14.3-.4 29.5 8.7 41.2S33.2 512 48 512H464c14.8 0 28.7-6.8 37.8-18.5s12.3-26.8 8.7-41.2l-72-288C433.2 143 414 128 392 128H346.5z"/></svg>
<div class="t" style="left:886px;top:966.93px;font-size:13.2px;line-height:17px;color:#e0e0e0;font-weight:400;letter-spacing:0px;-webkit-text-stroke:0.2px #e0e0e0;">Taille maximale</div>
<svg class="r" style="left:54px;top:759px;" width="21" height="24" viewBox="0 0 448 512"><path fill="#1b4cca" d="M364.2 83.8c-24.4-24.4-64-24.4-88.4 0l-184 184c-42.1 42.1-42.1 110.3 0 152.4s110.3 42.1 152.4 0l152-152c10.9-10.9 28.7-10.9 39.6 0s10.9 28.7 0 39.6l-152 152c-64 64-167.6 64-231.6 0s-64-167.6 0-231.6l184-184c46.3-46.3 121.3-46.3 167.6 0s46.3 121.3 0 167.6l-176 176c-28.6 28.6-75 28.6-103.6 0s-28.6-75 0-103.6l144-144c10.9-10.9 28.7-10.9 39.6 0s10.9 28.7 0 39.6l-144 144c-6.7 6.7-6.7 17.7 0 24.4s17.7 6.7 24.4 0l176-176c24.4-24.4 24.4-64 0-88.4z"/></svg>
<svg class="r" style="left:462.6px;top:761.8px;" width="19.4" height="19.8" viewBox="0 0 19.4 19.8"><rect x="0" y="0" width="19.4" height="19.8" rx="3.2" fill="#1a93a6"/><circle cx="5.4" cy="5.5" r="1.75" fill="#1b1b1b"/><path d="M2.6 16.4L6.4 11.2L8.1 13.2L11.8 8.2L16.6 16.4z" fill="#1b1b1b"/></svg>
<svg class="r" style="left:868.5px;top:760px;" width="22.5" height="22.5" viewBox="0 0 512 512"><path fill="#269c43" d="M399 384.2C376.9 345.8 335.4 320 288 320H224c-47.4 0-88.9 25.8-111 64.2c35.2 39.2 86.2 63.8 143 63.8s107.8-24.7 143-63.8zM0 256a256 256 0 1 1 512 0A256 256 0 1 1 0 256zm256 16a72 72 0 1 0 0-144 72 72 0 1 0 0 144z"/></svg>
<div class="r" style="left:51px;top:824px;width:68px;height:30px;box-sizing:border-box;border:1px solid #553236;border-radius:15.0px;background:#301d1f;"></div>
<svg class="r" style="left:63.2px;top:832.0px;" width="14.2" height="14" viewBox="0 0 512 512"><path fill="#dc3545" d="M0 64C0 28.7 28.7 0 64 0H224V128c0 17.7 14.3 32 32 32H384V448c0 35.3-28.7 64-64 64H64c-35.3 0-64-28.7-64-64V64zm384 64H256V0L384 128z"/><rect x="150" y="300" width="362" height="212" fill="#301d1f"/><text x="170" y="500" font-family="Liberation Sans" font-weight="700" font-size="200" textLength="330" lengthAdjust="spacingAndGlyphs" fill="#dc3545">PDF</text></svg>
<div class="t" style="left:83.8px;top:831.37px;font-size:12.5px;line-height:16px;color:#e6e6e6;font-weight:400;letter-spacing:0px;-webkit-text-stroke:0.25px #e6e6e6;">PDF</div>
<div class="r" style="left:125px;top:824px;width:71px;height:30px;box-sizing:border-box;border:1px solid #2e3a55;border-radius:15.0px;background:#1a2338;"></div>
<svg class="r" style="left:139px;top:832.4px;" width="10.6" height="14" viewBox="0 0 384 512"><path fill="#0d6efd" d="M0 64C0 28.7 28.7 0 64 0H224V128c0 17.7 14.3 32 32 32H384V448c0 35.3-28.7 64-64 64H64c-35.3 0-64-28.7-64-64V64zm384 64H256V0L384 128z"/><path d="M92 280L140 460L192 350L244 460L292 280" stroke="#1a2338" stroke-width="42" fill="none" stroke-linejoin="miter"/></svg>
<div class="t" style="left:157.8px;top:831.37px;font-size:12.5px;line-height:16px;color:#e6e6e6;font-weight:400;letter-spacing:0px;-webkit-text-stroke:0.25px #e6e6e6;">DOC</div>
<div class="r" style="left:202px;top:824px;width:80px;height:30px;box-sizing:border-box;border:1px solid #2e3a55;border-radius:15.0px;background:#1a2338;"></div>
<svg class="r" style="left:216px;top:832.4px;" width="10.6" height="14" viewBox="0 0 384 512"><path fill="#0d6efd" d="M0 64C0 28.7 28.7 0 64 0H224V128c0 17.7 14.3 32 32 32H384V448c0 35.3-28.7 64-64 64H64c-35.3 0-64-28.7-64-64V64zm384 64H256V0L384 128z"/><path d="M92 280L140 460L192 350L244 460L292 280" stroke="#1a2338" stroke-width="42" fill="none" stroke-linejoin="miter"/></svg>
<div class="t" style="left:234.8px;top:831.37px;font-size:12.5px;line-height:16px;color:#e6e6e6;font-weight:400;letter-spacing:0px;-webkit-text-stroke:0.25px #e6e6e6;">DOCX</div>
<div class="r" style="left:289px;top:824px;width:67px;height:30px;box-sizing:border-box;border:1px solid #3a3a3a;border-radius:15.0px;background:transparent;"></div>
<svg class="r" style="left:303px;top:832.4px;" width="10.6" height="14" viewBox="0 0 384 512"><path fill="#198754" d="M0 64C0 28.7 28.7 0 64 0H224V128c0 17.7 14.3 32 32 32H384V448c0 35.3-28.7 64-64 64H64c-35.3 0-64-28.7-64-64V64zm384 64H256V0L384 128z"/><path d="M120 280L264 460M264 280L120 460" stroke="#1b1b1b" stroke-width="50" fill="none"/></svg>
<div class="t" style="left:321.8px;top:831.37px;font-size:12.5px;line-height:16px;color:#e6e6e6;font-weight:400;letter-spacing:0px;-webkit-text-stroke:0.25px #e6e6e6;">XLS</div>
<div class="r" style="left:51px;top:861px;width:76px;height:30px;box-sizing:border-box;border:1px solid #3a3a3a;border-radius:15.0px;background:transparent;"></div>
<svg class="r" style="left:65px;top:869.4px;" width="10.6" height="14" viewBox="0 0 384 512"><path fill="#198754" d="M0 64C0 28.7 28.7 0 64 0H224V128c0 17.7 14.3 32 32 32H384V448c0 35.3-28.7 64-64 64H64c-35.3 0-64-28.7-64-64V64zm384 64H256V0L384 128z"/><path d="M120 280L264 460M264 280L120 460" stroke="#1b1b1b" stroke-width="50" fill="none"/></svg>
<div class="t" style="left:83.8px;top:868.37px;font-size:12.5px;line-height:16px;color:#e6e6e6;font-weight:400;letter-spacing:0px;-webkit-text-stroke:0.25px #e6e6e6;">XLSX</div>
<div class="r" style="left:133px;top:861px;width:67px;height:30px;box-sizing:border-box;border:1px solid #3a3a3a;border-radius:15.0px;background:transparent;"></div>
<svg class="r" style="left:147px;top:869.4px;" width="10.6" height="14" viewBox="0 0 384 512"><path fill="#fd7e14" d="M0 64C0 28.7 28.7 0 64 0H224V128c0 17.7 14.3 32 32 32H384V448c0 35.3-28.7 64-64 64H64c-35.3 0-64-28.7-64-64V64zm384 64H256V0L384 128z"/><path d="M130 470V290H205a55 55 0 0 1 0 110H130" stroke="#1b1b1b" stroke-width="46" fill="none"/></svg>
<div class="t" style="left:165.8px;top:868.37px;font-size:12.5px;line-height:16px;color:#e6e6e6;font-weight:400;letter-spacing:0px;-webkit-text-stroke:0.25px #e6e6e6;">PPT</div>
<div class="r" style="left:207px;top:861px;width:76px;height:30px;box-sizing:border-box;border:1px solid #3a3a3a;border-radius:15.0px;background:transparent;"></div>
<svg class="r" style="left:221px;top:869.4px;" width="10.6" height="14" viewBox="0 0 384 512"><path fill="#fd7e14" d="M0 64C0 28.7 28.7 0 64 0H224V128c0 17.7 14.3 32 32 32H384V448c0 35.3-28.7 64-64 64H64c-35.3 0-64-28.7-64-64V64zm384 64H256V0L384 128z"/><path d="M130 470V290H205a55 55 0 0 1 0 110H130" stroke="#1b1b1b" stroke-width="46" fill="none"/></svg>
<div class="t" style="left:239.8px;top:868.37px;font-size:12.5px;line-height:16px;color:#e6e6e6;font-weight:400;letter-spacing:0px;-webkit-text-stroke:0.25px #e6e6e6;">PPTX</div>
<div class="r" style="left:289px;top:861px;width:68px;height:30px;box-sizing:border-box;border:1px solid #3a3a3a;border-radius:15.0px;background:transparent;"></div>
<svg class="r" style="left:303px;top:869.4px;" width="10.6" height="14" viewBox="0 0 384 512"><path fill="#6c757d" d="M0 64C0 28.7 28.7 0 64 0H224V128c0 17.7 14.3 32 32 32H384V448c0 35.3-28.7 64-64 64H64c-35.3 0-64-28.7-64-64V64zm384 64H256V0L384 128z"/><path d="M96 290H288M96 360H288M96 430H288" stroke="#1b1b1b" stroke-width="34" fill="none"/></svg>
<div class="t" style="left:321.8px;top:868.37px;font-size:12.5px;line-height:16px;color:#e6e6e6;font-weight:400;letter-spacing:0px;-webkit-text-stroke:0.25px #e6e6e6;">TXT</div>
<div class="r" style="left:51px;top:897px;width:64px;height:30px;box-sizing:border-box;border:1px solid #2c4a50;border-radius:15.0px;background:#1a3136;"></div>
<svg class="r" style="left:65px;top:905.4px;" width="10.6" height="14" viewBox="0 0 384 512"><path fill="#0dcaf0" d="M0 64C0 28.7 28.7 0 64 0H224V128c0 17.7 14.3 32 32 32H384V448c0 35.3-28.7 64-64 64H64c-35.3 0-64-28.7-64-64V64zm384 64H256V0L384 128z"/><path d="M160 290L100 370L160 450M224 290L284 370L224 450" stroke="#1a3136" stroke-width="42" fill="none"/></svg>
<div class="t" style="left:83.8px;top:904.37px;font-size:12.5px;line-height:16px;color:#e6e6e6;font-weight:400;letter-spacing:0px;-webkit-text-stroke:0.25px #e6e6e6;">MD</div>
<div class="r" style="left:121px;top:897px;width:63px;height:30px;box-sizing:border-box;border:1px solid #3a3a3a;border-radius:15.0px;background:#242526;"></div>
<svg class="r" style="left:135px;top:905.4px;" width="10.6" height="14" viewBox="0 0 384 512"><path fill="#6c757d" d="M0 64C0 28.7 28.7 0 64 0H224V128c0 17.7 14.3 32 32 32H384V448c0 35.3-28.7 64-64 64H64c-35.3 0-64-28.7-64-64V64zm384 64H256V0L384 128z"/><rect x="64" y="40" width="64" height="56" fill="#242526"/><rect x="64" y="128" width="64" height="56" fill="#242526"/><rect x="64" y="216" width="64" height="56" fill="#242526"/><circle cx="112" cy="380" r="48" fill="#242526"/></svg>
<div class="t" style="left:153.8px;top:904.37px;font-size:12.5px;line-height:16px;color:#e6e6e6;font-weight:400;letter-spacing:0px;-webkit-text-stroke:0.25px #e6e6e6;">ZIP</div>
<div class="r" style="left:190px;top:897px;width:69px;height:30px;box-sizing:border-box;border:1px solid #3a3a3a;border-radius:15.0px;background:#242526;"></div>
<svg class="r" style="left:204px;top:905.4px;" width="10.6" height="14" viewBox="0 0 384 512"><path fill="#6c757d" d="M0 64C0 28.7 28.7 0 64 0H224V128c0 17.7 14.3 32 32 32H384V448c0 35.3-28.7 64-64 64H64c-35.3 0-64-28.7-64-64V64zm384 64H256V0L384 128z"/><rect x="64" y="40" width="64" height="56" fill="#242526"/><rect x="64" y="128" width="64" height="56" fill="#242526"/><rect x="64" y="216" width="64" height="56" fill="#242526"/><circle cx="112" cy="380" r="48" fill="#242526"/></svg>
<div class="t" style="left:222.8px;top:904.37px;font-size:12.5px;line-height:16px;color:#e6e6e6;font-weight:400;letter-spacing:0px;-webkit-text-stroke:0.25px #e6e6e6;">RAR</div>
<div class="r" style="left:266px;top:897px;width:58px;height:30px;box-sizing:border-box;border:1px solid #3a3a3a;border-radius:15.0px;background:#242526;"></div>
<svg class="r" style="left:280px;top:905.4px;" width="10.6" height="14" viewBox="0 0 384 512"><path fill="#6c757d" d="M0 64C0 28.7 28.7 0 64 0H224V128c0 17.7 14.3 32 32 32H384V448c0 35.3-28.7 64-64 64H64c-35.3 0-64-28.7-64-64V64zm384 64H256V0L384 128z"/><rect x="64" y="40" width="64" height="56" fill="#242526"/><rect x="64" y="128" width="64" height="56" fill="#242526"/><rect x="64" y="216" width="64" height="56" fill="#242526"/><circle cx="112" cy="380" r="48" fill="#242526"/></svg>
<div class="t" style="left:298.8px;top:904.37px;font-size:12.5px;line-height:16px;color:#e6e6e6;font-weight:400;letter-spacing:0px;-webkit-text-stroke:0.25px #e6e6e6;">7Z</div>
<div class="r" style="left:458px;top:824px;width:68px;height:48px;box-sizing:border-box;border:1px solid #34504f;border-radius:24.0px;background:#1b2d32;"></div>
<svg class="r" style="left:472px;top:842.0px;" width="10.6" height="14" viewBox="0 0 384 512"><path fill="#0dcaf0" d="M0 64C0 28.7 28.7 0 64 0H224V128c0 17.7 14.3 32 32 32H384V448c0 35.3-28.7 64-64 64H64c-35.3 0-64-28.7-64-64V64zm384 64H256V0L384 128z"/><circle cx="120" cy="290" r="40" fill="#1b2d32"/><path d="M64 450L150 340L200 400L250 320L330 450z" fill="#1b2d32"/></svg>
<div class="t" style="left:490.8px;top:840.97px;font-size:12.5px;line-height:16px;color:#e6e6e6;font-weight:400;letter-spacing:0px;-webkit-text-stroke:0.25px #e6e6e6;">JPG</div>
<div class="r" style="left:533px;top:824px;width:75px;height:48px;box-sizing:border-box;border:1px solid #34504f;border-radius:24.0px;background:#1b2d32;"></div>
<svg class="r" style="left:547px;top:842.0px;" width="10.6" height="14" viewBox="0 0 384 512"><path fill="#0dcaf0" d="M0 64C0 28.7 28.7 0 64 0H224V128c0 17.7 14.3 32 32 32H384V448c0 35.3-28.7 64-64 64H64c-35.3 0-64-28.7-64-64V64zm384 64H256V0L384 128z"/><circle cx="120" cy="290" r="40" fill="#1b2d32"/><path d="M64 450L150 340L200 400L250 320L330 450z" fill="#1b2d32"/></svg>
<div class="t" style="left:565.8px;top:840.97px;font-size:12.5px;line-height:16px;color:#e6e6e6;font-weight:400;letter-spacing:0px;-webkit-text-stroke:0.25px #e6e6e6;">JPEG</div>
<div class="r" style="left:614px;top:824px;width:70px;height:48px;box-sizing:border-box;border:1px solid #34504f;border-radius:24.0px;background:#1b2d32;"></div>
<svg class="r" style="left:628px;top:842.0px;" width="10.6" height="14" viewBox="0 0 384 512"><path fill="#0dcaf0" d="M0 64C0 28.7 28.7 0 64 0H224V128c0 17.7 14.3 32 32 32H384V448c0 35.3-28.7 64-64 64H64c-35.3 0-64-28.7-64-64V64zm384 64H256V0L384 128z"/><circle cx="120" cy="290" r="40" fill="#1b2d32"/><path d="M64 450L150 340L200 400L250 320L330 450z" fill="#1b2d32"/></svg>
<div class="t" style="left:646.8px;top:840.97px;font-size:12.5px;line-height:16px;color:#e6e6e6;font-weight:400;letter-spacing:0px;-webkit-text-stroke:0.25px #e6e6e6;">PNG</div>
<div class="r" style="left:691px;top:824px;width:63px;height:48px;box-sizing:border-box;border:1px solid #34504f;border-radius:24.0px;background:#1b2d32;"></div>
<svg class="r" style="left:705px;top:842.0px;" width="10.6" height="14" viewBox="0 0 384 512"><path fill="#0dcaf0" d="M0 64C0 28.7 28.7 0 64 0H224V128c0 17.7 14.3 32 32 32H384V448c0 35.3-28.7 64-64 64H64c-35.3 0-64-28.7-64-64V64zm384 64H256V0L384 128z"/><circle cx="120" cy="290" r="40" fill="#1b2d32"/><path d="M64 450L150 340L200 400L250 320L330 450z" fill="#1b2d32"/></svg>
<div class="t" style="left:723.8px;top:840.97px;font-size:12.5px;line-height:16px;color:#e6e6e6;font-weight:400;letter-spacing:0px;-webkit-text-stroke:0.25px #e6e6e6;">GIF</div>
<div class="r" style="left:458px;top:879px;width:80px;height:48px;box-sizing:border-box;border:1px solid #3a3a3a;border-radius:24.0px;background:transparent;"></div>
<svg class="r" style="left:472px;top:897.0px;" width="10.6" height="14" viewBox="0 0 384 512"><path fill="#0dcaf0" d="M0 64C0 28.7 28.7 0 64 0H224V128c0 17.7 14.3 32 32 32H384V448c0 35.3-28.7 64-64 64H64c-35.3 0-64-28.7-64-64V64zm384 64H256V0L384 128z"/><circle cx="120" cy="290" r="40" fill="#1b1b1b"/><path d="M64 450L150 340L200 400L250 320L330 450z" fill="#1b1b1b"/></svg>
<div class="t" style="left:490.8px;top:895.97px;font-size:12.5px;line-height:16px;color:#e6e6e6;font-weight:400;letter-spacing:0px;-webkit-text-stroke:0.25px #e6e6e6;">WEBP</div>
<div class="r" style="left:866px;top:824px;width:67px;height:48px;box-sizing:border-box;border:1px solid #34504f;border-radius:24.0px;background:#1b2d32;"></div>
<svg class="r" style="left:880px;top:842.0px;" width="10.6" height="14" viewBox="0 0 384 512"><path fill="#0dcaf0" d="M0 64C0 28.7 28.7 0 64 0H224V128c0 17.7 14.3 32 32 32H384V448c0 35.3-28.7 64-64 64H64c-35.3 0-64-28.7-64-64V64zm384 64H256V0L384 128z"/><circle cx="120" cy="290" r="40" fill="#1b2d32"/><path d="M64 450L150 340L200 400L250 320L330 450z" fill="#1b2d32"/></svg>
<div class="t" style="left:898.8px;top:840.97px;font-size:12.5px;line-height:16px;color:#e6e6e6;font-weight:400;letter-spacing:0px;-webkit-text-stroke:0.25px #e6e6e6;">JPG</div>
<div class="r" style="left:940px;top:824px;width:75px;height:48px;box-sizing:border-box;border:1px solid #34504f;border-radius:24.0px;background:#1b2d32;"></div>
<svg class="r" style="left:954px;top:842.0px;" width="10.6" height="14" viewBox="0 0 384 512"><path fill="#0dcaf0" d="M0 64C0 28.7 28.7 0 64 0H224V128c0 17.7 14.3 32 32 32H384V448c0 35.3-28.7 64-64 64H64c-35.3 0-64-28.7-64-64V64zm384 64H256V0L384 128z"/><circle cx="120" cy="290" r="40" fill="#1b2d32"/><path d="M64 450L150 340L200 400L250 320L330 450z" fill="#1b2d32"/></svg>
<div class="t" style="left:972.8px;top:840.97px;font-size:12.5px;line-height:16px;color:#e6e6e6;font-weight:400;letter-spacing:0px;-webkit-text-stroke:0.25px #e6e6e6;">JPEG</div>
<div class="r" style="left:1022px;top:824px;width:70px;height:48px;box-sizing:border-box;border:1px solid #34504f;border-radius:24.0px;background:#1b2d32;"></div>
<svg class="r" style="left:1036px;top:842.0px;" width="10.6" height="14" viewBox="0 0 384 512"><path fill="#0dcaf0" d="M0 64C0 28.7 28.7 0 64 0H224V128c0 17.7 14.3 32 32 32H384V448c0 35.3-28.7 64-64 64H64c-35.3 0-64-28.7-64-64V64zm384 64H256V0L384 128z"/><circle cx="120" cy="290" r="40" fill="#1b2d32"/><path d="M64 450L150 340L200 400L250 320L330 450z" fill="#1b2d32"/></svg>
<div class="t" style="left:1054.8px;top:840.97px;font-size:12.5px;line-height:16px;color:#e6e6e6;font-weight:400;letter-spacing:0px;-webkit-text-stroke:0.25px #e6e6e6;">PNG</div>
<div class="r" style="left:1098px;top:824px;width:64px;height:48px;box-sizing:border-box;border:1px solid #34504f;border-radius:24.0px;background:#1b2d32;"></div>
<svg class="r" style="left:1112px;top:842.0px;" width="10.6" height="14" viewBox="0 0 384 512"><path fill="#0dcaf0" d="M0 64C0 28.7 28.7 0 64 0H224V128c0 17.7 14.3 32 32 32H384V448c0 35.3-28.7 64-64 64H64c-35.3 0-64-28.7-64-64V64zm384 64H256V0L384 128z"/><circle cx="120" cy="290" r="40" fill="#1b2d32"/><path d="M64 450L150 340L200 400L250 320L330 450z" fill="#1b2d32"/></svg>
<div class="t" style="left:1130.8px;top:840.97px;font-size:12.5px;line-height:16px;color:#e6e6e6;font-weight:400;letter-spacing:0px;-webkit-text-stroke:0.25px #e6e6e6;">GIF</div>
<div class="r" style="left:866px;top:879px;width:80px;height:48px;box-sizing:border-box;border:1px solid #3a3a3a;border-radius:24.0px;background:transparent;"></div>
<svg class="r" style="left:880px;top:897.0px;" width="10.6" height="14" viewBox="0 0 384 512"><path fill="#0dcaf0" d="M0 64C0 28.7 28.7 0 64 0H224V128c0 17.7 14.3 32 32 32H384V448c0 35.3-28.7 64-64 64H64c-35.3 0-64-28.7-64-64V64zm384 64H256V0L384 128z"/><circle cx="120" cy="290" r="40" fill="#1b1b1b"/><path d="M64 450L150 340L200 400L250 320L330 450z" fill="#1b1b1b"/></svg>
<div class="t" style="left:898.8px;top:895.97px;font-size:12.5px;line-height:16px;color:#e6e6e6;font-weight:400;letter-spacing:0px;-webkit-text-stroke:0.25px #e6e6e6;">WEBP</div>
<div class="r" style="left:170px;top:956px;width:89px;height:39px;box-sizing:border-box;border:1px solid #444;border-radius:6px;background:#282828;"></div>
<div class="t" style="left:170px;top:967.2px;width:49px;text-align:right;font-size:13px;line-height:20px;color:#e6e6e6;-webkit-text-stroke:0.35px #e6e6e6;">10</div>
<div class="t" style="left:231.3px;top:968.13px;font-size:12.6px;line-height:16px;color:#5f5f5f;font-weight:400;letter-spacing:0px;">MB</div>
<div class="r" style="left:577px;top:956px;width:89px;height:39px;box-sizing:border-box;border:1px solid #444;border-radius:6px;background:#282828;"></div>
<div class="t" style="left:577px;top:967.2px;width:49px;text-align:right;font-size:13px;line-height:20px;color:#e6e6e6;-webkit-text-stroke:0.35px #e6e6e6;">5</div>
<div class="t" style="left:638.3px;top:968.13px;font-size:12.6px;line-height:16px;color:#5f5f5f;font-weight:400;letter-spacing:0px;">MB</div>
<div class="r" style="left:985px;top:956px;width:89px;height:39px;box-sizing:border-box;border:1px solid #444;border-radius:6px;background:#282828;"></div>
<div class="t" style="left:985px;top:967.2px;width:49px;text-align:right;font-size:13px;line-height:20px;color:#e6e6e6;-webkit-text-stroke:0.35px #e6e6e6;">2</div>
<div class="t" style="left:1046.3px;top:968.13px;font-size:12.6px;line-height:16px;color:#5f5f5f;font-weight:400;letter-spacing:0px;">MB</div>
<div class="r" style="left:929px;top:1027px;width:320px;height:38px;background:linear-gradient(135deg,#1b56e0,#1a47c0);border-radius:6px;"></div>
<svg class="r" style="left:945px;top:1039px;" width="14" height="16.0" viewBox="0 0 448 512"><path fill="#fff" d="M64 32C28.7 32 0 60.7 0 96v320c0 35.3 28.7 64 64 64h320c35.3 0 64-28.7 64-64V173.3c0-17-6.7-33.3-18.7-45.3L352 50.7C340 38.7 323.7 32 306.7 32H64zm0 96c0-17.7 14.3-32 32-32h192c17.7 0 32 14.3 32 32v64c0 17.7-14.3 32-32 32H96c-17.7 0-32-14.3-32-32v-64zm160 160a64 64 0 1 1 0 128 64 64 0 1 1 0-128z"/></svg>
<div class="t" style="left:970px;top:1035.96px;font-size:16px;line-height:21px;color:#ffffff;font-weight:400;letter-spacing:0.45px;">Enregistrer Paramètres des fichiers</div>
</div></body></html>
